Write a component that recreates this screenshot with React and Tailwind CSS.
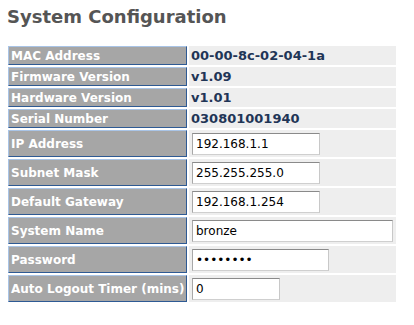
import React from "react";

const info = [
  ["MAC Address", "00-00-8c-02-04-1a"],
  ["Firmware Version", "v1.09"],
  ["Hardware Version", "v1.01"],
  ["Serial Number", "030801001940"],
];

const inputs = [
  ["IP Address", "192.168.1.1", "w-[128px]", "text"],
  ["Subnet Mask", "255.255.255.0", "w-[128px]", "text"],
  ["Default Gateway", "192.168.1.254", "w-[128px]", "text"],
  ["System Name", "bronze", "w-[201px]", "text"],
  ["Password", "password", "w-[137px]", "password"],
  ["Auto Logout Timer (mins)", "0", "w-[88px]", "text"],
];

function Label({ children, tall }) {
  return (
    <div
      className={`flex items-center bg-[#a6a6a6] border border-t-[#a9c4e6] border-l-[#a9c4e6] border-r-[#2e5a94] border-b-[#2e5a94] pl-[2px] text-white font-bold text-[12px] whitespace-nowrap ${
        tall ? "h-[27px]" : "h-[19px]"
      }`}
    >
      {children}
    </div>
  );
}

export default function App() {
  return (
    <div className="bg-white w-[414px] h-[325px] font-['DejaVu_Sans',sans-serif]">
      <div className="pl-[7px] pt-[5px] text-[18px] leading-[24px] font-bold text-[#555555]">
        System Configuration
      </div>
      <div className="ml-[8px] mt-[17px] grid grid-cols-[179px_207px] gap-[2px]">
        {info.map(([l, v]) => (
          <React.Fragment key={l}>
            <Label>{l}</Label>
            <div className="h-[19px] bg-[#eeeeee] flex items-center pl-[2px] text-[13px] font-bold text-[#1f3556]">
              {v}
            </div>
          </React.Fragment>
        ))}
        {inputs.map(([l, v, w, t]) => (
          <React.Fragment key={l}>
            <Label tall>{l}</Label>
            <div className="h-[27px] bg-[#eeeeee] flex items-center pl-[3px]">
              <input
                type={t}
                defaultValue={v}
                className={`${w} h-[22px] bg-white border border-t-[#8a8a8a] border-l-[#a8a8a8] border-r-[#c8c8c8] border-b-[#cfcfcf] px-[3px] text-[12px] text-black font-['DejaVu_Sans',sans-serif] outline-none`}
              />
            </div>
          </React.Fragment>
        ))}
      </div>
    </div>
  );
}
